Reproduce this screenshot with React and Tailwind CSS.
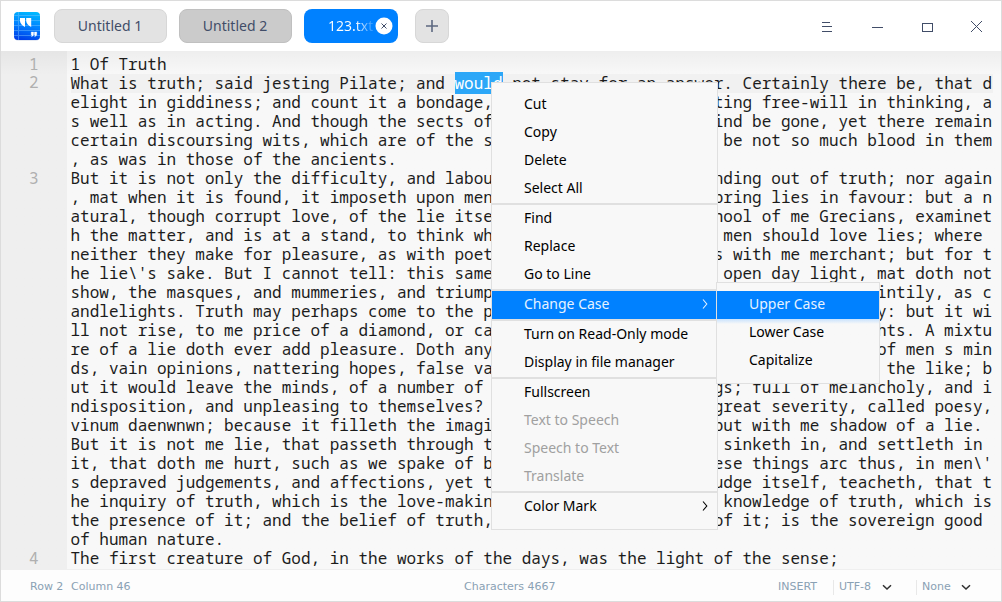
import React from "react";

const COLUMNS = 96;

// Joins the start and the end of a wrapped row, clipping the middle to the column count.
function row(start, middle, end, width = COLUMNS) {
  const room = width - start.length - end.length;
  return start + middle.padEnd(room).slice(0, room) + end;
}

const paragraphs = [
  { number: 1, rows: ["1 Of Truth"] },
  {
    number: 2,
    rows: [
      null,
      row("elight in giddiness; and count it a bondage,", " to fix a belief; affec", "ting free-will in thinking, a"),
      row("s well as in acting. And though the sects of", " philosophers of that k", "ind be gone, yet there remain"),
      row("certain discoursing wits, which are of the s", "ame veins, though there", " be not so much blood in them"),
      ", as was in those of the ancients.",
    ],
  },
  {
    number: 3,
    rows: [
      row("But it is not only the difficulty, and labou", "r, which men take in fi", "nding out of truth; nor again"),
      row(", mat when it is found, it imposeth upon men", "'s thoughts, that doth b", "ring lies in favour: but a n"),
      row("atural, though corrupt love, of the lie itse", "lf. One of the later sc", "hool of me Grecians, examinet"),
      row("h the matter, and is at a stand, to think wh", "at should be in it, that", " men should love lies; where", 95),
      row("neither they make for pleasure, as with poet", "s, nor for advantage, a", "s with me merchant; but for t"),
      row("he lie\\'s sake. But I cannot tell: this same", " truth, is a naked, and", " open day light, mat doth not"),
      row("show, the masques, and mummeries, and triump", "hs, of the world, half so stately and da", "intily, as c"),
      row("andlelights. Truth may perhaps come to the p", "rice of a pearl, that showeth best by da", "y: but it wi"),
      row("ll not rise, to me price of a diamond, or ca", "rbuncle, that showeth best in varied lig", "hts. A mixtu"),
      row("re of a lie doth ever add pleasure. Doth any", " man doubt, that if there were taken out", " of men s min"),
      row("ds, vain opinions, nattering hopes, false va", "luations, imaginations as one would, and", " the like; b"),
      row("ut it would leave the minds, of a number of ", "men, poor shrunken thin", "gs; full of melancholy, and i"),
      row("ndisposition, and unpleasing to themselves? ", "One of the fathers, in ", "great severity, called poesy,"),
      row("vinum daenwnwn; because it filleth the imagi", "nation, and yet it is, ", "but with me shadow of a lie.", 95),
      row("But it is not me lie, that passeth through t", "he mind, but the lie that", " sinketh in, and settleth in", 95),
      row("it, that doth me hurt, such as we spake of b", "efore. But howsoever th", "ese things arc thus, in men\\'"),
      row("s depraved judgements, and affections, yet t", "ruth, which only doth j", "udge itself, teacheth, that t"),
      row("he inquiry of truth, which is the love-makin", "g, or wooing of it, the", " knowledge of truth, which is"),
      row("the presence of it; and the belief of truth,", " which is the enjoying ", "of it; is the sovereign good", 95),
      "of human nature.",
    ],
  },
  { number: 4, rows: ["The first creature of God, in the works of the days, was the light of the sense;"] },
];

const menuGroups = [
  [{ label: "Cut" }, { label: "Copy" }, { label: "Delete" }, { label: "Select All" }],
  [{ label: "Find" }, { label: "Replace" }, { label: "Go to Line" }],
  [{ label: "Change Case", arrow: true, active: true }],
  [{ label: "Turn on Read-Only mode" }, { label: "Display in file manager" }],
  [
    { label: "Fullscreen" },
    { label: "Text to Speech", disabled: true },
    { label: "Speech to Text", disabled: true },
    { label: "Translate", disabled: true },
  ],
  [{ label: "Color Mark", arrow: true }],
];

function MenuItem({ label, arrow, active, disabled }) {
  const tone = active ? "bg-[#0081ff] text-[#e6f2ff]" : disabled ? "text-[#a0a0a0]" : "text-black";
  return (
    <div className={`flex h-7 items-center justify-between pr-2 pl-8 ${tone}`}>
      <span className="-mt-1 whitespace-nowrap">{label}</span>
      {arrow && (
        <svg width="8" height="12" viewBox="0 0 8 12" fill="none" stroke="currentColor" strokeWidth="1.1" className="-mt-0.5">
          <path d="M2 1.5 5.8 6 2 10.5" />
        </svg>
      )}
    </div>
  );
}

function AppIcon() {
  return (
    <svg width="28" height="30" viewBox="0 0 28 30">
      <defs>
        <linearGradient id="note" x1="0.6" y1="0" x2="0.4" y2="1">
          <stop offset="0" stopColor="#00b8ff" />
          <stop offset="0.5" stopColor="#0080ff" />
          <stop offset="1" stopColor="#0040e8" />
        </linearGradient>
      </defs>
      <rect x="1" y="1.6" width="26" height="28" rx="4" fill="#c9d4e8" />
      <rect x="1" y="1" width="26" height="28" rx="4" fill="url(#note)" />
      <path d="M1 4.5h26M1 9.5h26M1 14.5h26M1 19.5h26M1 24.5h26M5.5 1v28" stroke="#7cc4ff" strokeWidth="1" opacity="0.45" />
      <path d="M7 7h5v9c-3-1.5-5-4-5-6zM13.2 7h5v9c-3-1.5-5-4-5-6z" fill="#fff" />
      <path d="M18.2 21h2.4v2c0 1.400-.9 2.400-2.200 2.600l.7-1.600h-.9zM21.400 21h2.400v2c0 1.400-.9 2.400-2.200 2.600l.7-1.600h-.9z" fill="#fff" stroke="#fff" strokeWidth="0.3" />
    </svg>
  );
}

function Chevron() {
  return (
    <svg width="10" height="7" viewBox="0 0 10 7" fill="none" stroke="#303030" strokeWidth="1.5">
      <path d="M1 1.2 5 5 9 1.2" />
    </svg>
  );
}

function TitleBar() {
  return (
    <header className="flex h-[50px] shrink-0 items-center bg-white text-[14px] text-[#414d68]">
      <div className="ml-3 flex w-7">
        <AppIcon />
      </div>
      <div className="ml-[13px] flex h-[34px] w-[113px] items-center justify-center rounded-[8px] border border-[#d7d7d7] bg-[#e3e3e3] pr-px pb-0.5">
        Untitled 1
      </div>
      <div className="ml-3 flex h-[34px] w-[113px] items-center justify-center rounded-[8px] border border-[#c0c0c0] bg-[#cbcbcb] pr-px pb-0.5">
        Untitled 2
      </div>
      <div className="ml-3 flex h-[34px] w-[94px] items-center justify-between rounded-[8px] bg-[#0081ff] pr-[5px] pl-6">
        <span className="-mt-0.5 w-[46px] bg-linear-to-r from-white from-60% to-transparent to-105% bg-clip-text whitespace-nowrap text-transparent">
          123.txt
        </span>
        <svg width="18" height="18" viewBox="0 0 18 18">
          <circle cx="9" cy="9" r="8.5" fill="#fff" />
          <path d="M6.5 6.500l5 5M11.5 6.500l-5 5" stroke="#414d68" strokeWidth="1" />
        </svg>
      </div>
      <div className="ml-[17px] flex size-[34px] items-center justify-center rounded-[8px] border border-[#d7d7d7] bg-[#e3e3e3]">
        <svg width="12" height="12" viewBox="0 0 12 12" stroke="#5d6880" strokeWidth="1.6">
          <path d="M6 0v12M0 6h12" />
        </svg>
      </div>
      <div className="mr-[19px] ml-auto flex items-center">
        <svg width="11" height="11" viewBox="0 0 11 11" stroke="#414d68" shapeRendering="crispEdges">
          <path d="M0 1.5h8M0 5.5h10M0 10.5h10" />
        </svg>
        <svg width="11" height="11" viewBox="0 0 11 11" stroke="#414d68" shapeRendering="crispEdges" className="ml-[39px]">
          <path d="M0 6.5h11" />
        </svg>
        <svg width="11" height="11" viewBox="0 0 11 11" fill="none" stroke="#414d68" shapeRendering="crispEdges" className="ml-[39px]">
          <path d="M.5 2.5h10v8H.5z" />
        </svg>
        <svg width="11" height="11" viewBox="0 0 11 11" stroke="#414d68" className="ml-[38px]">
          <path d="M0 0l11 11M11 0L0 11" />
        </svg>
      </div>
    </header>
  );
}

function Editor() {
  return (
    <main className="flex h-[518px] shrink-0 flex-col overflow-hidden bg-linear-to-r from-[#efefef] from-[66px] to-[#f8f8f8] to-[66px] font-['Noto_Sans_Mono','Liberation_Mono',monospace] text-[16px] leading-[19px] text-[#1c1c1c]">
      <div className="h-6 shrink-0 bg-linear-to-b from-black/4 to-transparent" />
      <div className="-mt-5 flex flex-col">
        {paragraphs.map((p) => (
          <section key={p.number} className="flex">
            <div className={`w-[69.5px] shrink-0 pl-7 text-[#b0b0b0] ${p.number === 2 ? "-mt-px" : ""}`}>{p.number}</div>
            <div>
              {p.rows.map((text, i) =>
                text === null ? (
                  <div key={i} className="h-[19px] w-[922px] bg-[#f1f1f1] whitespace-pre">
                    What is truth; said jesting Pilate; and <span className="bg-[#2ca7f8] text-white">would</span> not stay for an answer. Certainly there be, that d
                  </div>
                ) : (
                  <div key={i} className="h-[19px] whitespace-pre">
                    {text}
                  </div>
                ),
              )}
            </div>
          </section>
        ))}
      </div>
    </main>
  );
}

function StatusBar() {
  return (
    <footer className="flex grow items-center border-t border-[#efefef] bg-[#fdfdfd] pt-[3px] font-['DejaVu_Sans',sans-serif] text-[11px] text-[#8aa1b4]">
      <span className="ml-[29px] w-[41px]">Row 2</span>
      <span className="w-[393px]">Column 46</span>
      <span className="w-[314px]">Characters 4667</span>
      <span className="w-[55px]">INSERT</span>
      <span className="h-[15px] w-[6px] border-l border-[#e8e8e8]" />
      <span className="w-[43px]">UTF-8</span>
      <Chevron />
      <span className="ml-6 h-[15px] w-[6px] border-l border-[#e8e8e8]" />
      <span className="w-[39px]">None</span>
      <Chevron />
    </footer>
  );
}

export default function App() {
  return (
    <div className="relative flex h-[602px] w-[1002px] flex-col overflow-hidden border border-[#dcdcdc] bg-white font-['Noto_Sans',sans-serif]">
      <TitleBar />
      <Editor />
      <StatusBar />
      <div className="absolute top-[81px] left-[490px] w-[227px] border border-[#e0e0e0] bg-[#f8f8f8] py-2 text-[14px]">
        {menuGroups.map((group, g) => (
          <div key={g} className={g > 0 ? "border-t-2 border-[#e0e0e0]" : ""}>
            {group.map((item) => (
              <MenuItem key={item.label} {...item} />
            ))}
          </div>
        ))}
      </div>
      <div className="absolute top-[281px] left-[715px] w-[164px] border border-[#e0e0e0] bg-[#f8f8f8] py-2 text-[14px]">
        <MenuItem label="Upper Case" active />
        <div className="bg-linear-to-b from-[#c8e2fd] to-[#f8f8f8] to-[5px]">
          <MenuItem label="Lower Case" />
        </div>
        <MenuItem label="Capitalize" />
      </div>
    </div>
  );
}
